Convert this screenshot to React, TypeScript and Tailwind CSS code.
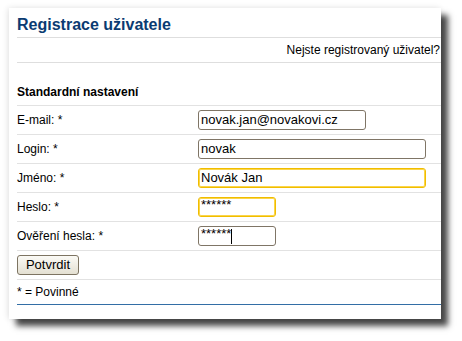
import React from "react";

const font = { fontFamily: '"Liberation Sans", Arial, sans-serif' };

function Field({ w, yellow, children }: { w: string; yellow?: boolean; children: React.ReactNode }) {
  return (
    <div
      className={`${w} h-[20px] rounded-[3px] border bg-white px-[2px] flex items-center text-[13px] leading-[16px] text-black whitespace-nowrap overflow-hidden ${
        yellow ? "border-[#f0bd00] shadow-[inset_0_0_0_1px_#fbd54a]" : "border-[#7f7566]"
      }`}
    >
      {children}
    </div>
  );
}

function Row({ label, children }: { label: string; children: React.ReactNode }) {
  return (
    <div className="flex h-[29px] border-b border-[#e2e2e2] pt-[4px]">
      <div className="w-[181px] shrink-0 text-[12px] leading-[16px] pt-[2px] text-black">{label}</div>
      {children}
    </div>
  );
}

export default function App() {
  return (
    <div className="w-[462px] h-[341px] bg-white overflow-hidden" style={font}>
      <div className="ml-[9px] mt-[8px] w-[432px] h-[311px] bg-white overflow-hidden shadow-[7px_7px_6px_rgba(0,0,0,0.72),-1px_0_6px_rgba(0,0,0,0.12)] pl-[8px]">
        <div className="h-[30px] pt-[7px] border-b border-[#dedede]">
          <div className="text-[16px] leading-[20px] font-bold text-[#0b3b72]">Registrace uživatele</div>
        </div>
        <div className="h-[25px] flex items-center justify-end border-b border-[#dedede] text-[12px] text-black whitespace-nowrap">
          <span className="pr-[1px]">Nejste registrovaný uživatel?</span>
        </div>
        <div className="h-[43px] pt-[22px] border-b border-[#e2e2e2]">
          <div className="text-[12px] leading-[14px] font-bold text-black">Standardní nastavení</div>
        </div>
        <Row label="E-mail: *">
          <Field w="w-[168px]">novak.jan@novakovi.cz</Field>
        </Row>
        <Row label="Login: *">
          <Field w="w-[228px]">novak</Field>
        </Row>
        <Row label="Jméno: *">
          <Field w="w-[228px]" yellow>Novák Jan</Field>
        </Row>
        <Row label="Heslo: *">
          <Field w="w-[78px]" yellow>
            <span className="self-start mt-[1px] leading-[12px]">******</span>
          </Field>
        </Row>
        <Row label="Ověření hesla: *">
          <Field w="w-[78px]">
            <span className="self-start mt-[1px] leading-[12px]">******</span>
            <span className="w-[1px] h-[15px] bg-black"></span>
          </Field>
        </Row>
        <div className="h-[29px] pt-[4px] border-b border-[#e2e2e2]">
          <div className="w-[62px] h-[20px] rounded-[3px] border border-[#7d7462] bg-gradient-to-b from-[#fbfaf6] to-[#e4e0d2] flex items-center justify-center text-[13px] text-black">
            Potvrdit
          </div>
        </div>
        <div className="h-[25px] flex items-center border-b border-[#336ea6] text-[12px] text-black">
          * = Povinné
        </div>
      </div>
    </div>
  );
}
